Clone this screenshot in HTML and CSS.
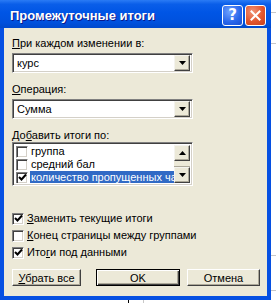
FILE: index.html
```html
<!DOCTYPE html>
<html lang="ru">
  <head>
    <meta charset="utf-8">
    <title>Промежуточные итоги</title>
    <link rel="stylesheet" href="styles.css">
  </head>
  <body>

  <div class="dialog">
    <div class="titlebar">
      <span class="title">Промежуточные итоги</span>
      <span class="tbtn help">?</span>
      <span class="tbtn close">
        <svg width="11" height="11" viewBox="0 0 11 11"><path d="M1.5 1.5 L9.5 9.5 M9.5 1.5 L1.5 9.5" stroke="#fff" stroke-width="2" stroke-linecap="square"/></svg>
      </span>
    </div>

    <div class="frame">
      <div class="label"><u>П</u>ри каждом изменении в:</div>
      <div class="combo">
        <span class="value">курс</span>
        <span class="drop"><svg width="7" height="4" viewBox="0 0 7 4"><path d="M0 0 H7 L3.5 4 Z" fill="#000"/></svg></span>
      </div>

      <div class="label"><u>О</u>перация:</div>
      <div class="combo">
        <span class="value">Сумма</span>
        <span class="drop"><svg width="7" height="4" viewBox="0 0 7 4"><path d="M0 0 H7 L3.5 4 Z" fill="#000"/></svg></span>
      </div>

      <div class="label list-label">До<u>б</u>авить итоги по:</div>
      <div class="list">
        <div class="items">
          <div class="item"><span class="box"></span><span class="text">группа</span></div>
          <div class="item"><span class="box"></span><span class="text">средний бал</span></div>
          <div class="item selected"><span class="box"><svg width="9" height="9" viewBox="0 0 9 9"><path d="M1 4 L3.5 6.5 L8 1.5" fill="none" stroke="#000" stroke-width="2"/></svg></span><span class="text">количество пропущенных часов</span></div>
        </div>
        <div class="scroll">
          <span class="sbtn"><svg width="7" height="4" viewBox="0 0 7 4"><path d="M0 4 H7 L3.5 0 Z" fill="#000"/></svg></span>
          <span class="thumb"></span>
          <span class="sbtn"><svg width="7" height="4" viewBox="0 0 7 4"><path d="M0 0 H7 L3.5 4 Z" fill="#000"/></svg></span>
        </div>
      </div>

      <div class="checks">
        <div class="check"><span class="box"><svg width="9" height="9" viewBox="0 0 9 9"><path d="M1 4 L3.5 6.5 L8 1.5" fill="none" stroke="#000" stroke-width="2"/></svg></span><span><u>З</u>аменить текущие итоги</span></div>
        <div class="check"><span class="box"></span><span><u>К</u>онец страницы между группами</span></div>
        <div class="check"><span class="box"><svg width="9" height="9" viewBox="0 0 9 9"><path d="M1 4 L3.5 6.5 L8 1.5" fill="none" stroke="#000" stroke-width="2"/></svg></span><span>Ито<u>г</u>и под данными</span></div>
      </div>

      <div class="buttons">
        <span class="button remove"><span><u>У</u>брать все</span></span>
        <span class="button ok">OK</span>
        <span class="button cancel">Отмена</span>
      </div>
    </div>
  </div>

  </body>
</html>
```

FILE: styles.css
```css
* {
  box-sizing: border-box;
}

body {
  margin: 0;
  width: 276px;
  height: 303px;
  overflow: hidden;
  font-family: Tahoma, "Liberation Sans", sans-serif;
  font-size: 11px;
  color: #000;
  background:
    linear-gradient(#c8c8c8, #c8c8c8) 0 12px / 100% 1px no-repeat,
    linear-gradient(#c8c8c8, #c8c8c8) 0 43px / 100% 1px no-repeat,
    linear-gradient(#c8c8c8, #c8c8c8) 0 255px / 100% 1px no-repeat,
    linear-gradient(#c8c8c8, #c8c8c8) 0 290px / 100% 1px no-repeat,
    linear-gradient(#000, #000) 128px 0 / 1px 100% no-repeat,
    linear-gradient(#c8c8c8, #c8c8c8) 143px 0 / 1px 100% no-repeat,
    #fff;
}

u {
  text-decoration: underline;
  text-underline-offset: 1px;
}

.dialog {
  width: 271px;
  height: 300px;
  display: flex;
  flex-direction: column;
}

/* title bar */

.titlebar {
  height: 28px;
  flex: none;
  display: flex;
  align-items: center;
  padding: 0 5px 0 10px;
  background: linear-gradient(#2a7bf5 0%, #0a5ee9 15%, #0055e5 45%, #0051dd 80%, #0049cc 100%);
}

.title {
  flex: 1;
  color: #fff;
  font-family: "Liberation Sans", sans-serif;
  font-weight: bold;
  font-size: 13px;
  text-shadow: 1px 1px 0 #0a1a8c;
  white-space: nowrap;
  padding-top: 2px;
}

.tbtn {
  width: 21px;
  height: 21px;
  border: 1px solid #fff;
  border-radius: 3px;
  display: flex;
  align-items: center;
  justify-content: center;
  margin-top: 2px;
}

.help {
  margin-right: 2px;
  color: #fff;
  font-family: "DejaVu Sans", sans-serif;
  font-weight: bold;
  font-size: 15px;
  background: radial-gradient(circle at 35% 30%, #6ea2ff, #2865ea 60%, #1b4fd0);
}

.close {
  background: radial-gradient(circle at 35% 30%, #f09478, #e2562e 55%, #c8401c);
}

/* dialog body */

.frame {
  flex: 1;
  background: #ece9d8;
  border: 4px solid #0650e2;
  border-top: 0;
  padding: 9px 7px 0 8px;
}

.label {
  height: 13px;
  line-height: 13px;
  margin-bottom: 3px;
}

.label.list-label {
  margin-bottom: 0;
}

.combo {
  width: 181px;
  height: 20px;
  margin-bottom: 10px;
  display: flex;
  align-items: center;
  background: #fff;
  border: 1px solid;
  border-color: #808080 #fff #fff #808080;
  box-shadow: inset 1px 1px 0 #404040, inset -1px -1px 0 #d4d0c8;
  padding: 2px 2px 2px 4px;
}

.combo + .list-label {
  margin-top: 1px;
}

.combo .value {
  flex: 1;
}

.drop, .sbtn {
  width: 16px;
  height: 16px;
  display: flex;
  align-items: center;
  justify-content: center;
  background: #ece9d8;
  border: 1px solid;
  border-color: #f4f3ee #404040 #404040 #f4f3ee;
  box-shadow: inset -1px -1px 0 #aca899;
}

/* list */

.list {
  width: 181px;
  height: 44px;
  display: flex;
  background: #fff;
  border: 1px solid;
  border-color: #808080 #fff #fff #808080;
  box-shadow: inset 1px 1px 0 #404040, inset -1px -1px 0 #d4d0c8;
  padding: 2px;
  margin-bottom: 26px;
}

.items {
  flex: 1;
  overflow: hidden;
}

.item {
  height: 13px;
  display: flex;
  align-items: center;
  white-space: nowrap;
}

.item .box {
  margin: 0 2px 0 1px;
}

.item .text {
  flex: 1;
  line-height: 13px;
  padding-left: 1px;
}

.item.selected .text {
  background: #316ac5;
  color: #fff;
}

.box {
  width: 12px;
  height: 12px;
  flex: none;
  display: inline-flex;
  align-items: center;
  justify-content: center;
  background: #fff;
  border: 1px solid;
  border-color: #808080 #fff #fff #808080;
  box-shadow: inset 1px 1px 0 #404040, inset -1px -1px 0 #d4d0c8;
}

.scroll {
  width: 16px;
  display: flex;
  flex-direction: column;
}

.thumb {
  flex: 1;
  background: #ece9d8;
  border-bottom: 1px solid #aca899;
}

/* checkboxes */

.checks {
  display: flex;
  flex-direction: column;
  gap: 4px;
  margin-bottom: 10px;
}

.check {
  height: 13px;
  line-height: 13px;
  display: flex;
  align-items: center;
  gap: 3px;
}

/* buttons */

.buttons {
  display: flex;
}

.button {
  height: 17px;
  display: flex;
  align-items: center;
  justify-content: center;
  background: #ece9d8;
  border: 1px solid;
  border-color: #fff #404040 #404040 #fff;
  box-shadow: inset -1px -1px 0 #aca899;
}

.remove {
  width: 70px;
}

.ok {
  width: 85px;
  margin-left: 15px;
  border: 1px solid #000;
  box-shadow: inset 1px 1px 0 #fff, inset -1px -1px 0 #404040, inset -2px -2px 0 #aca899;
}

.cancel {
  width: 74px;
  margin-left: 7px;
}
```
